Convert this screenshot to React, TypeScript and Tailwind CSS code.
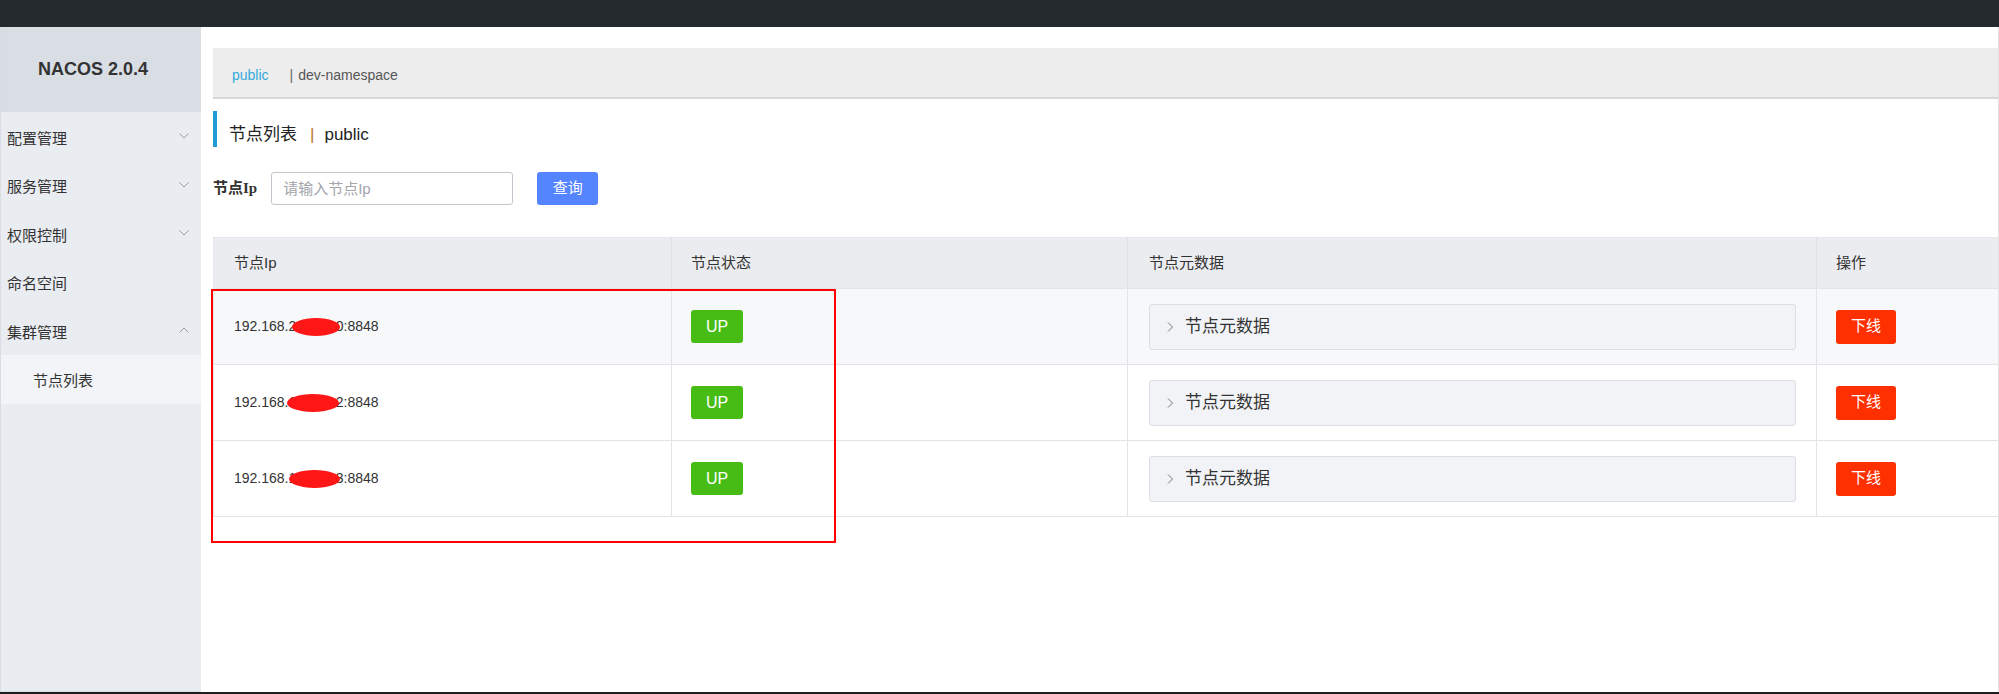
import React from "react";

const Down = () => (
  <svg width="10" height="6" viewBox="0 0 10 6" fill="none">
    <polyline points="0.5,0.5 5,5 9.5,0.5" stroke="#9a9ea6" strokeWidth="1" />
  </svg>
);
const Up = () => (
  <svg width="10" height="6" viewBox="0 0 10 6" fill="none">
    <polyline points="0.5,5.5 5,1 9.5,5.5" stroke="#9a9ea6" strokeWidth="1" />
  </svg>
);
const Right = () => (
  <svg width="7" height="10" viewBox="0 0 7 10" fill="none">
    <polyline points="1,0.5 5.5,5 1,9.5" stroke="#777" strokeWidth="1" />
  </svg>
);

const menu: { label: string; icon: "down" | "up" | null }[] = [
  { label: "配置管理", icon: "down" },
  { label: "服务管理", icon: "down" },
  { label: "权限控制", icon: "down" },
  { label: "命名空间", icon: null },
  { label: "集群管理", icon: "up" },
];

const rows = [
  { bg: "bg-[#f7f8fa]", l: "2", r: "0", blobLeft: 3, blobW: 48 },
  { bg: "bg-white", l: "1", r: "2", blobLeft: -2, blobW: 52 },
  { bg: "bg-white", l: "1", r: "3", blobLeft: 0, blobW: 51 },
];

export default function App() {
  return (
    <div className="h-[694px] w-[1999px] flex flex-col overflow-hidden bg-white text-[#333] font-['Liberation_Sans','Noto_Sans_CJK_SC',sans-serif]">
      <div className="h-[27px] shrink-0 bg-[#252a2f]" />
      <div className="flex flex-1 min-h-0">
        <aside className="w-[201px] shrink-0 flex flex-col bg-[#e9ecf1] border-l border-b border-[#d9dde3]">
          <div className="h-[85px] shrink-0 flex items-center pl-[37px] bg-[#d9dee4] text-[18px] font-bold text-[#333]">
            NACOS 2.0.4
          </div>
          {menu.map((m) => (
            <div
              key={m.label}
              className="h-[48.5px] shrink-0 flex items-center justify-between pl-[6px] pr-[12px] text-[15px] text-[#333]"
            >
              <span className="pt-[5px]">{m.label}</span>
              {m.icon === "down" && <Down />}
              {m.icon === "up" && <Up />}
            </div>
          ))}
          <div className="h-[49px] shrink-0 flex items-center pl-[32px] bg-[#f2f4f7] text-[15px] text-[#333]">
            <span className="pt-[5px]">节点列表</span>
          </div>
        </aside>

        <main className="flex-1 min-w-0 flex flex-col pl-[12px] pt-[21px] border-r border-[#e2e2e2]">
          <div className="h-[51px] shrink-0 flex items-center pl-[19px] pt-[5px] bg-[#ededed] border-b-2 border-[#d8d8d8] text-[14px]">
            <span className="text-[#33a9db]">public</span>
            <span className="ml-[21px] text-[#666]">|</span>
            <span className="ml-[5px] text-[#555]">dev-namespace</span>
          </div>

          <div className="mt-[12px] h-[36px] shrink-0 flex items-center pt-[12px] pl-[12px] border-l-4 border-[#1f9cd3] text-[17px] text-[#222]">
            <span>节点列表</span>
            <span className="ml-[13px] text-[#b9772c]">|</span>
            <span className="ml-[10px]">public</span>
          </div>

          <div className="mt-[25px] h-[33px] shrink-0 flex items-center">
            <span className="text-[15px] font-bold text-[#333]">
              节点<span className="font-['Liberation_Serif']">Ip</span>
            </span>
            <input
              readOnly
              placeholder="请输入节点Ip"
              className="ml-[14px] w-[242px] h-[33px] border border-[#c4c6cf] rounded-[3px] pl-[11px] text-[15px] outline-none placeholder:text-[#a3a5ab]"
            />
            <button className="ml-[24px] w-[61px] h-[33px] rounded-[3px] bg-[#5584ff] text-white text-[15px]">
              查询
            </button>
          </div>

          <div className="relative mt-[32px] border-l border-t border-[#e6e7eb]">
            <div className="grid grid-cols-[458px_456px_689px_1fr] h-[51px] bg-[#ebecf0] border-b border-[#e3e4e8] text-[15px] text-[#333]">
              <div className="flex items-center pl-[20px] border-r border-[#dfe0e5]">节点Ip</div>
              <div className="flex items-center pl-[19px] border-r border-[#dfe0e5]">节点状态</div>
              <div className="flex items-center pl-[21px] border-r border-[#dfe0e5]">节点元数据</div>
              <div className="flex items-center pl-[19px]">操作</div>
            </div>
            {rows.map((r, i) => (
              <div
                key={i}
                className={`grid grid-cols-[458px_456px_689px_1fr] h-[76px] border-b-[1.5px] border-[#e3e4e8] ${r.bg}`}
              >
                <div className="flex items-center pl-[20px] border-r border-[#e3e4e8] text-[14px] text-[#333]">
                  <span>192.168.</span>
                  <span className="relative w-[55px] flex justify-between">
                    <span>{r.l}</span>
                    <span>{r.r}</span>
                    <span
                      className="absolute top-1/2 -translate-y-1/2 h-[18px] rounded-[50%] bg-[#ff1616]"
                      style={{ left: r.blobLeft, width: r.blobW }}
                    />
                  </span>
                  <span>:8848</span>
                </div>
                <div className="flex items-center pl-[19px] border-r border-[#e3e4e8]">
                  <span className="w-[52px] h-[33px] flex items-center justify-center rounded-[3px] bg-[#46bc15] text-white text-[16px]">
                    UP
                  </span>
                </div>
                <div className="flex items-center pl-[21px] pr-[20px] border-r border-[#e3e4e8]">
                  <div className="flex-1 h-[46px] flex items-center pl-[17px] bg-[#f2f3f7] border border-[#dcdee3] rounded-[3px]">
                    <Right />
                    <span className="ml-[11px] text-[17px] text-[#333]">节点元数据</span>
                  </div>
                </div>
                <div className="flex items-center pl-[19px]">
                  <span className="w-[60px] h-[34px] flex items-center justify-center rounded-[3px] bg-[#ff3000] text-white text-[15px]">
                    下线
                  </span>
                </div>
              </div>
            ))}
            <div className="pointer-events-none absolute left-[-3px] top-[51px] w-[625px] h-[254px] border-2 border-[#f00]" />
          </div>
        </main>
      </div>
      <div className="h-[2px] shrink-0 bg-[#1e1e1e]" />
    </div>
  );
}
